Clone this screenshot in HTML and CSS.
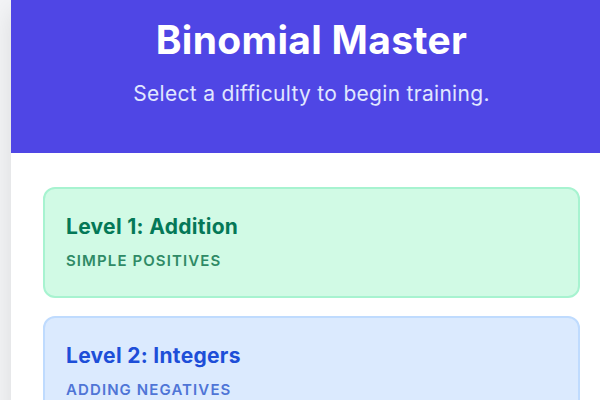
FILE: index.html
```html
<!DOCTYPE html>
<html lang="en">
<head>
  <meta charset="UTF-8">
  <meta name="viewport" content="width=device-width, initial-scale=1.0">
  <title>Binomial Master</title>
  <link rel="stylesheet" href="styles.css">
</head>
<body>
  <div class="container">
    <header>
      <h1>Binomial Master</h1>
      <p>Select a difficulty to begin training.</p>
    </header>

    <main class="levels">
      <button class="level level-green">
        <h3>Level 1: Addition</h3>
        <span>Simple Positives</span>
      </button>
      <button class="level level-blue">
        <h3>Level 2: Integers</h3>
        <span>Adding Negatives</span>
      </button>
      <button class="level level-purple">
        <h3>Level 3: Subtraction</h3>
        <span>Mixed Signs</span>
      </button>
    </main>
  </div>
</body>
</html>
```

FILE: styles.css
```css
* {
  margin: 0;
  padding: 0;
  box-sizing: border-box;
}

body {
  font-family: Inter, 'Noto Sans', sans-serif;
  background-color: #f3f4f6;
  padding-left: 11px;
  overflow: hidden;
}

.container {
  width: 601px;
  background-color: white;
  box-shadow: 0 10px 25px rgba(0, 0, 0, 0.1);
}

header {
  background-color: #4f46e5;
  color: white;
  text-align: center;
  padding: 20px 20px 45px;
}

header h1 {
  font-size: 39px;
  line-height: 40px;
  font-weight: 700;
  letter-spacing: 0.3px;
  margin-bottom: 20px;
}

header p {
  font-size: 21px;
  line-height: 28px;
  letter-spacing: 0.3px;
  color: #e0e7ff;
}

.levels {
  display: flex;
  flex-direction: column;
  gap: 18px;
  padding: 34px 32px 32px;
}

.level {
  display: block;
  width: 100%;
  text-align: left;
  font-family: inherit;
  padding: 24px 21px 25px;
  border: 2px solid;
  border-radius: 12px;
  cursor: pointer;
}

.level h3 {
  font-size: 21px;
  line-height: 28px;
  font-weight: 700;
  letter-spacing: 0.3px;
}

.level span {
  display: block;
  margin-top: 10px;
  font-size: 15px;
  line-height: 20px;
  font-weight: 600;
  text-transform: uppercase;
  letter-spacing: 1.1px;
}

.level-green {
  background-color: #d1fae5;
  border-color: #a7f3d0;
}

.level-green h3 {
  color: #047857;
}

.level-green span {
  color: #2f8a66;
}

.level-blue {
  background-color: #dbeafe;
  border-color: #bfdbfe;
}

.level-blue h3 {
  color: #1d4ed8;
}

.level-blue span {
  color: #4f75d6;
}

.level-purple {
  background-color: #ede9fe;
  border-color: #ddd6fe;
}

.level-purple h3 {
  color: #6d28d9;
}

.level-purple span {
  color: #7c5ad6;
}
```
